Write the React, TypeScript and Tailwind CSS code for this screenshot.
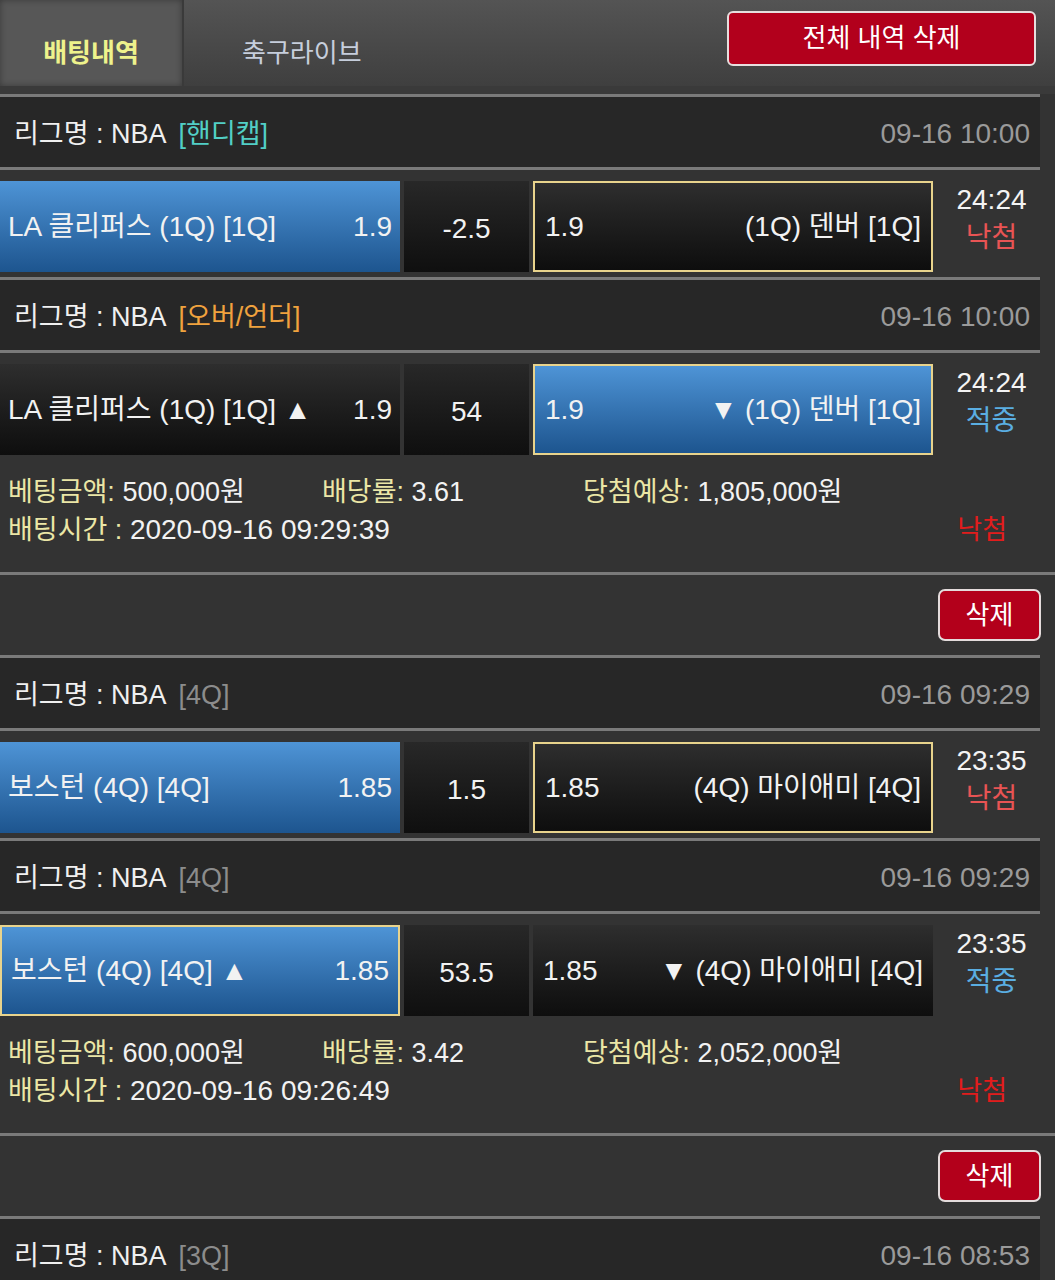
import React from "react";

type Side = { name: string; odds: string; blue?: boolean; picked?: boolean };
type Match = {
  tag: string;
  tagColor: string;
  date: string;
  home: Side;
  line: string;
  away: Side;
  time: string;
  won: boolean;
};
type Ticket = { matches: Match[]; amount: string; rate: string; expect: string; betTime: string };

const tickets: Ticket[] = [
  {
    matches: [
      {
        tag: "[핸디캡]",
        tagColor: "text-[#52cfc6]",
        date: "09-16 10:00",
        home: { name: "LA 클리퍼스 (1Q) [1Q]", odds: "1.9", blue: true },
        line: "-2.5",
        away: { name: "(1Q) 덴버 [1Q]", odds: "1.9", picked: true },
        time: "24:24",
        won: false,
      },
      {
        tag: "[오버/언더]",
        tagColor: "text-[#f0a23e]",
        date: "09-16 10:00",
        home: { name: "LA 클리퍼스 (1Q) [1Q] ▲", odds: "1.9" },
        line: "54",
        away: { name: "▼ (1Q) 덴버 [1Q]", odds: "1.9", blue: true, picked: true },
        time: "24:24",
        won: true,
      },
    ],
    amount: "500,000원",
    rate: "3.61",
    expect: "1,805,000원",
    betTime: "2020-09-16 09:29:39",
  },
  {
    matches: [
      {
        tag: "[4Q]",
        tagColor: "text-[#8c8c8c]",
        date: "09-16 09:29",
        home: { name: "보스턴 (4Q) [4Q]", odds: "1.85", blue: true },
        line: "1.5",
        away: { name: "(4Q) 마이애미 [4Q]", odds: "1.85", picked: true },
        time: "23:35",
        won: false,
      },
      {
        tag: "[4Q]",
        tagColor: "text-[#8c8c8c]",
        date: "09-16 09:29",
        home: { name: "보스턴 (4Q) [4Q] ▲", odds: "1.85", blue: true, picked: true },
        line: "53.5",
        away: { name: "▼ (4Q) 마이애미 [4Q]", odds: "1.85" },
        time: "23:35",
        won: true,
      },
    ],
    amount: "600,000원",
    rate: "3.42",
    expect: "2,052,000원",
    betTime: "2020-09-16 09:26:49",
  },
];

function Sep({ full }: { full?: boolean }) {
  return <div className={`h-[3px] bg-[#7a7a7a] ${full ? "w-full" : "w-[1040px]"}`} />;
}

function LeagueHeader({ tag, tagColor, date }: { tag: string; tagColor: string; date: string }) {
  return (
    <div className="flex h-[70px] w-[1040px] items-center justify-between bg-[#272727] pl-[14px] pr-[10px] pt-[4px]">
      <div className="text-[27px] text-[#f0f0f0]">
        리그명 : NBA <span className={`ml-[6px] ${tagColor}`}>{tag}</span>
      </div>
      <div className="text-[#9a9a9a]">{date}</div>
    </div>
  );
}

function SideBox({ side, align }: { side: Side; align: "home" | "away" }) {
  const bg = side.blue
    ? "bg-linear-to-b from-[#4e94d6] to-[#1d558f]"
    : "bg-linear-to-b from-[#2e2e2e] to-[#0e0e0e]";
  const border = side.picked ? "border-2 border-[#e8d38c]" : "";
  const pad = align === "away" ? "px-[10px]" : side.picked ? "px-[9px]" : "px-[8px]";
  return (
    <div className={`flex h-full w-[400px] items-center justify-between ${bg} ${border} ${pad}`}>
      {align === "home" ? (
        <>
          <span>{side.name}</span>
          <span>{side.odds}</span>
        </>
      ) : (
        <>
          <span>{side.odds}</span>
          <span>{side.name}</span>
        </>
      )}
    </div>
  );
}

function BetRow({ m }: { m: Match }) {
  return (
    <div className="flex h-[107px] w-[1040px] pb-[5px] pt-[11px]">
      <div className="w-[401px] shrink-0">
        <SideBox side={m.home} align="home" />
      </div>
      <div className="ml-[3px] flex w-[125px] shrink-0 items-center justify-center bg-linear-to-b from-[#282828] to-[#0f0f0f] pt-[4px]">
        {m.line}
      </div>
      <div className="ml-[4px] w-[400px] shrink-0">
        <SideBox side={m.away} align="away" />
      </div>
      <div className="flex flex-1 flex-col items-center pl-[10px] leading-[38px]">
        <span className="text-[#f4f4f4]">{m.time}</span>
        <span className={m.won ? "text-[#5aaee2]" : "text-[#e85454]"}>{m.won ? "적중" : "낙첨"}</span>
      </div>
    </div>
  );
}

function TicketBlock({ t, first }: { t: Ticket; first: boolean }) {
  return (
    <div>
      {!first && <Sep />}
      {t.matches.map((m, i) => (
        <div key={i}>
          {i > 0 && <Sep />}
          <LeagueHeader tag={m.tag} tagColor={m.tagColor} date={m.date} />
          <Sep />
          <BetRow m={m} />
        </div>
      ))}
      <div className="h-[112px] pl-[8px] pt-[13px] text-[27px] leading-[38px]">
        <div className="flex">
          <div className="w-[314px]">
            <span className="text-[#ebe6a6]">베팅금액:</span> <span className="text-[#f2f2f2]">{t.amount}</span>
          </div>
          <div className="w-[261px]">
            <span className="text-[#ebe6a6]">배당률:</span> <span className="text-[#f2f2f2]">{t.rate}</span>
          </div>
          <div>
            <span className="text-[#ebe6a6]">당첨예상:</span> <span className="text-[#f2f2f2]">{t.expect}</span>
          </div>
        </div>
        <div className="flex justify-between pr-[48px]">
          <div>
            <span className="text-[#ebe6a6]">배팅시간 :</span>{" "}
            <span className="text-[28px] text-[#f2f2f2]">{t.betTime}</span>
          </div>
          <span className="text-[#e21c1c]">낙첨</span>
        </div>
      </div>
      <Sep full />
      <div className="flex h-[80px] items-center justify-end pr-[14px]">
        <button className="h-[52px] w-[103px] rounded-[7px] border-2 border-[#e4dcdc] bg-[#b3001b] text-[26px] text-white">
          삭제
        </button>
      </div>
    </div>
  );
}

export default function App() {
  return (
    <div className="min-h-[1280px] w-[1055px] overflow-hidden bg-[#333333] font-['Liberation_Sans','Noto_Sans_CJK_KR',sans-serif] text-[28px] text-[#f2f2f2]">
      {/* top tabs */}
      <div className="flex h-[86px] items-stretch bg-linear-to-b from-[#545454] to-[#3f3f3f]">
        <div className="flex w-[184px] items-center justify-center border-r-2 border-[#3a3a3a] bg-[#575757] pt-[20px] text-[26px] font-bold text-[#eef28c] shadow-[inset_0_0_6px_rgba(0,0,0,0.35)]">
          배팅내역
        </div>
        <div className="ml-[58px] flex items-center pt-[20px] text-[26px] text-[#c6cedc]">축구라이브</div>
        <div className="ml-auto mr-[19px] mt-[11px]">
          <button className="h-[55px] w-[309px] rounded-[6px] border-2 border-[#e6dede] bg-[#b2001c] text-[26px] text-white">
            전체 내역 삭제
          </button>
        </div>
      </div>
      <div className="h-[8px] bg-[#3a3a3a]" />
      <Sep />

      {tickets.map((t, i) => (
        <TicketBlock key={i} t={t} first={i === 0} />
      ))}

      <Sep />
      <LeagueHeader tag="[3Q]" tagColor="text-[#8c8c8c]" date="09-16 08:53" />
    </div>
  );
}
